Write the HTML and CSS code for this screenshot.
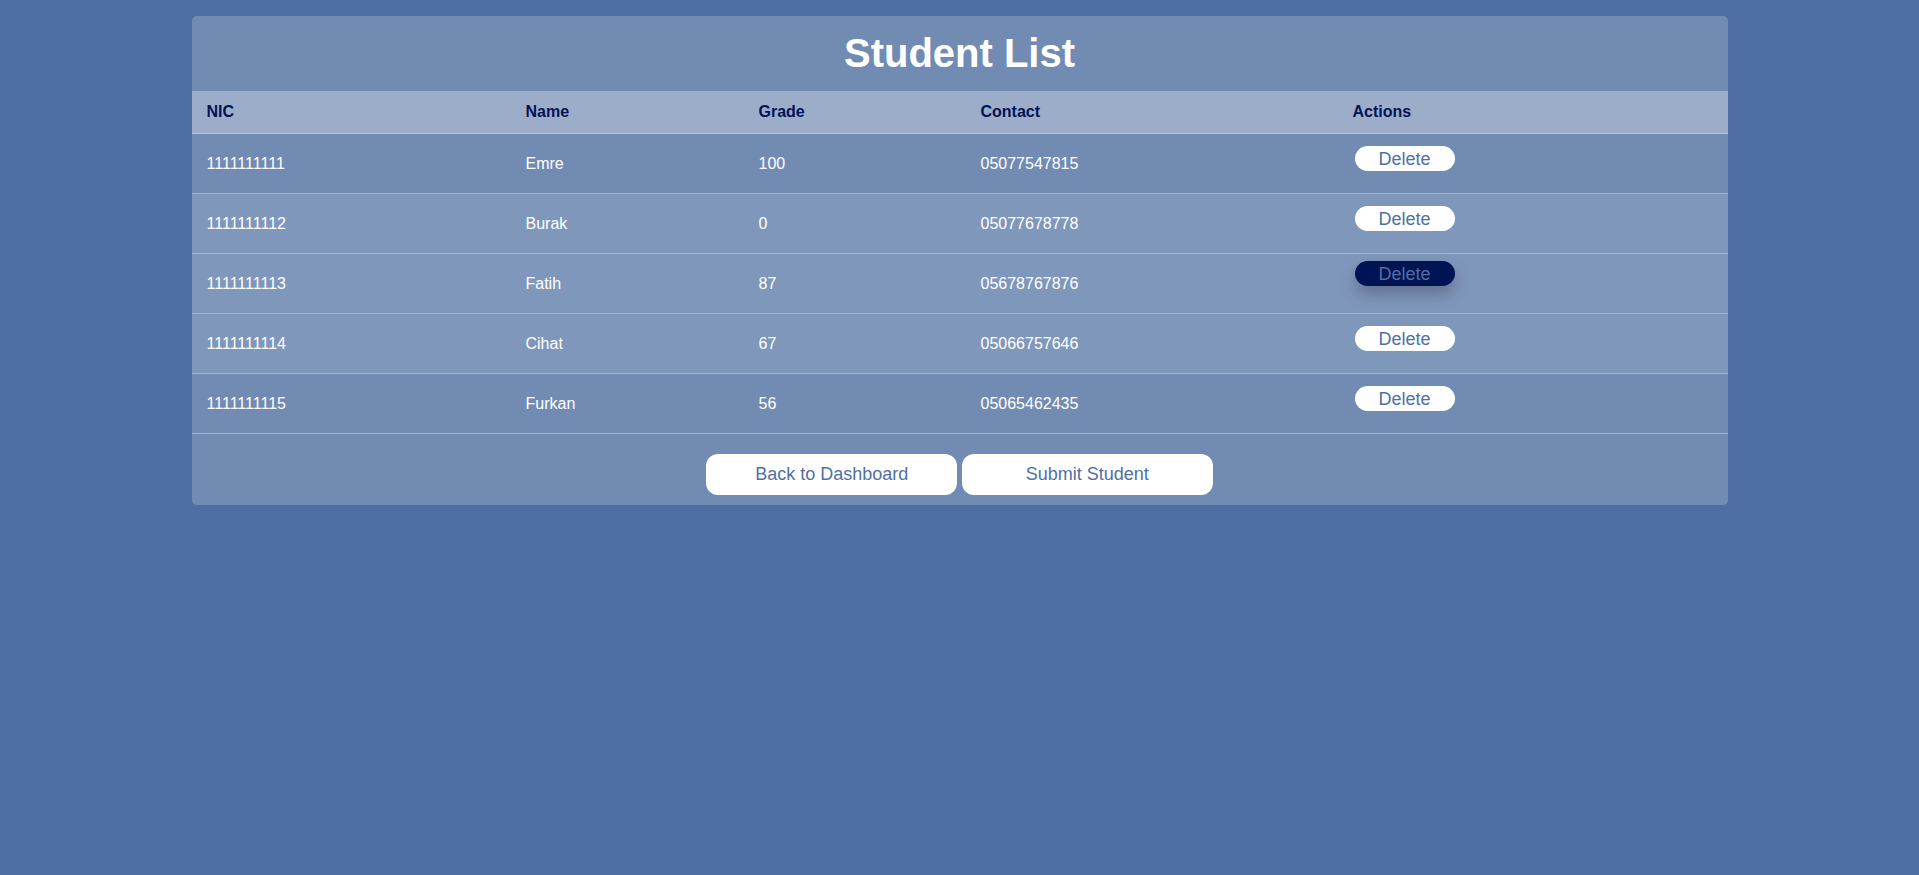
FILE: index.html
```html
<!DOCTYPE html>
<html lang="en">
<head>
<meta charset="utf-8">
<title>Student List</title>
<link rel="stylesheet" href="styles.css">
</head>
<body>
<main class="card">
  <h1 class="title">Student List</h1>
  <table class="students">
    <thead>
      <tr>
        <th class="col-nic">NIC</th>
        <th class="col-name">Name</th>
        <th class="col-grade">Grade</th>
        <th class="col-contact">Contact</th>
        <th class="col-actions">Actions</th>
      </tr>
    </thead>
    <tbody>
      <tr>
        <td>1111111111</td><td>Emre</td><td>100</td><td>05077547815</td>
        <td class="actions"><button class="btn-delete">Delete</button></td>
      </tr>
      <tr>
        <td>1111111112</td><td>Burak</td><td>0</td><td>05077678778</td>
        <td class="actions"><button class="btn-delete">Delete</button></td>
      </tr>
      <tr class="is-hover">
        <td>1111111113</td><td>Fatih</td><td>87</td><td>05678767876</td>
        <td class="actions"><button class="btn-delete is-hover">Delete</button></td>
      </tr>
      <tr>
        <td>1111111114</td><td>Cihat</td><td>67</td><td>05066757646</td>
        <td class="actions"><button class="btn-delete">Delete</button></td>
      </tr>
      <tr>
        <td>1111111115</td><td>Furkan</td><td>56</td><td>05065462435</td>
        <td class="actions"><button class="btn-delete">Delete</button></td>
      </tr>
    </tbody>
  </table>
  <div class="footer">
    <button class="btn-main">Back to Dashboard</button>
    <button class="btn-main">Submit Student</button>
  </div>
</main>
</body>
</html>
```

FILE: styles.css
```css
html, body {
  margin: 0;
  padding: 0;
}

body {
  background: #4f6fa4;
  font-family: "Liberation Sans", Arial, sans-serif;
  font-size: 16px;
  min-height: 875px;
}

.card {
  width: 1536px;
  margin: 16px auto 0;
  background: #728bb2;
  border-radius: 5px;
  overflow: hidden;
}

.title {
  margin: 0;
  padding: 14px 0 15px;
  font-size: 40px;
  font-weight: bold;
  line-height: 46px;
  color: #ffffff;
  text-align: center;
}

.students {
  width: 100%;
  border-collapse: collapse;
  table-layout: fixed;
}

.students th {
  background: #9cadc9;
  color: #011356;
  font-weight: bold;
  text-align: left;
  padding: 12px 15px;
  line-height: 18px;
  border-bottom: 1px solid #b9c6dc;
}

.col-nic { width: 289px; }
.col-name { width: 203px; }
.col-grade { width: 192px; }
.col-contact { width: 342px; }

.students td {
  padding: 12px 15px;
  color: #ffffff;
  vertical-align: middle;
  line-height: 18px;
  border-bottom: 1px solid #a3b4d0;
}

.students tbody tr:nth-child(even),
.students tbody tr.is-hover {
  background: #8097bc;
}

.students td.actions {
  vertical-align: top;
}

.btn-delete {
  display: block;
  width: 100px;
  height: 25px;
  margin: 0 0 10px 2px;
  padding: 0;
  border: none;
  border-radius: 13px;
  background: #ffffff;
  color: #4f6fa4;
  font-family: "Liberation Sans", Arial, sans-serif;
  font-size: 18px;
  line-height: 22px;
  text-align: center;
}

.btn-delete.is-hover {
  background: #001354;
  color: #4f6fa4;
  transform: translateY(-5px);
  box-shadow: 0 8px 16px rgba(0, 0, 0, 0.25);
}

.footer {
  padding: 20px 0 10px;
  text-align: center;
}

.btn-main {
  display: inline-block;
  width: 251px;
  height: 41px;
  margin: 0;
  padding: 0;
  border: none;
  border-radius: 12px;
  background: #ffffff;
  color: #4f6fa4;
  font-family: "Liberation Sans", Arial, sans-serif;
  font-size: 18px;
  vertical-align: top;
}
```
